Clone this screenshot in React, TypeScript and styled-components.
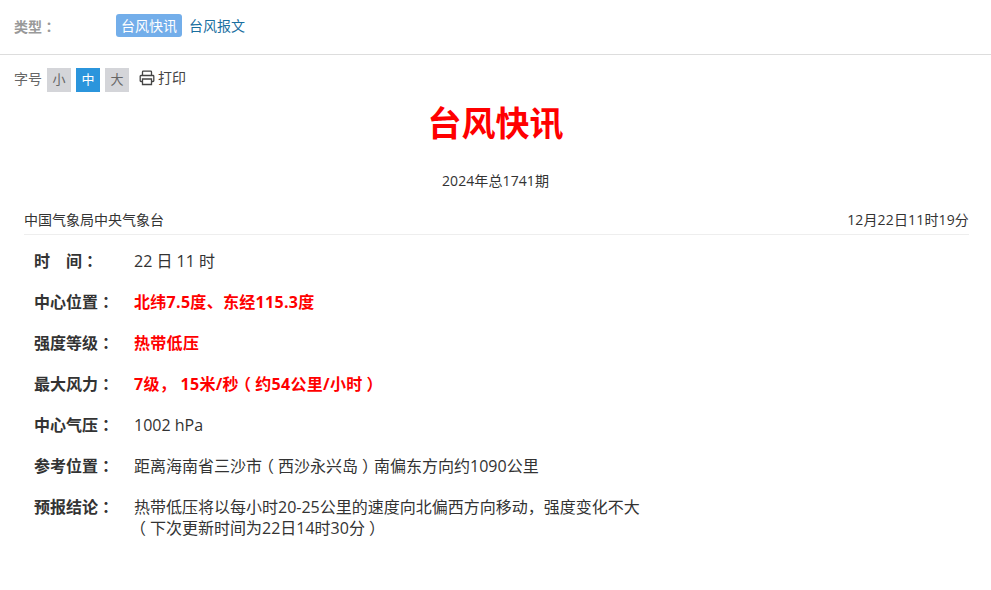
import { FC, Fragment } from 'react';
import styled, { createGlobalStyle } from 'styled-components';

const FONT = `'Open Sans', 'Noto Sans CJK SC', sans-serif`;

type Report = {
  label: string;
  lines: string[];
  alert?: boolean;
};

const reports: Report[] = [
  { label: '时\u3000间：', lines: [ '22 日 11 时' ] },
  { label: '中心位置：', lines: [ '北纬7.5度、东经115.3度' ], alert: true },
  { label: '强度等级：', lines: [ '热带低压' ], alert: true },
  { label: '最大风力：', lines: [ '7级， 15米/秒（约54公里/小时）' ], alert: true },
  { label: '中心气压：', lines: [ '1002 hPa' ] },
  { label: '参考位置：', lines: [ '距离海南省三沙市（西沙永兴岛）南偏东方向约1090公里' ] },
  {
    label: '预报结论：',
    lines: [ '热带低压将以每小时20-25公里的速度向北偏西方向移动，强度变化不大', '（下次更新时间为22日14时30分）' ],
  },
];

// the colon and brackets sit in the middle of their cell in the original
const withPunct = ( text: string ) => text.split( /([：（）])/ ).map( ( part, i ) => {
  if ( part === '：' ) return <Punct key={ i }>{ part }</Punct>;
  if ( part === '（' ) return <OpenBracket key={ i }>{ part }</OpenBracket>;
  if ( part === '）' ) return <CloseBracket key={ i }>{ part }</CloseBracket>;
  return <Fragment key={ i }>{ part }</Fragment>;
} );

const PrintIcon: FC = () => (
  <svg width="16" height="16" viewBox="0 0 16 16" fill="none" stroke="#444" strokeWidth="1.3">
    <path d="M3.5 5.5V2a.8.8 0 0 1 .8-.8h7.4a.8.8 0 0 1 .8.8v3.5" />
    <path d="M3.5 11.5H2a.8.8 0 0 1-.8-.8V6.3a.8.8 0 0 1 .8-.8h12a.8.8 0 0 1 .8.8v4.4a.8.8 0 0 1-.8.8h-1.5" />
    <path d="M3.5 9h9v5.500h-9z" />
  </svg>
);

export default function App() {
  return (
    <>
      <GlobalStyle />
      <TypeBar>
        <TypeLabel>类型<Punct>：</Punct></TypeLabel>
        <TypeTab $active>台风快讯</TypeTab>
        <TypeTab>台风报文</TypeTab>
      </TypeBar>
      <Tools>
        <ToolsLabel>字号</ToolsLabel>
        <SizeButton>小</SizeButton>
        <SizeButton $active>中</SizeButton>
        <SizeButton>大</SizeButton>
        <PrintButton>
          <PrintIcon />
          打印
        </PrintButton>
      </Tools>
      <Title>台风快讯</Title>
      <Issue>2024年总1741期</Issue>
      <Source>
        <span>中国气象局中央气象台</span>
        <Stamp>12月22日11时19分</Stamp>
      </Source>
      <ReportList>
        { reports.map( ( { label, lines, alert } ) => (
          <ReportRow key={ label }>
            <ReportLabel>{ withPunct( label ) }</ReportLabel>
            <ReportValue $alert={ alert }>
              { lines.map( ( line ) => <div key={ line }>{ withPunct( line ) }</div> ) }
            </ReportValue>
          </ReportRow>
        ) ) }
      </ReportList>
    </>
  );
}

const GlobalStyle = createGlobalStyle`
  body {
    margin: 0;
    background-color: #ffffff;
    font-family: ${ FONT };
    color: #333333;
  }
`;
const Punct = styled.span`
  font-family: 'Noto Sans CJK TC', sans-serif;
  line-height: 0;
`;
const OpenBracket = styled.span`
  margin: 0 4px 0 -4px;
`;
const CloseBracket = styled.span`
  margin: 0 -4px 0 4px;
`;
const TypeBar = styled.div`
  display: flex;
  align-items: center;
  height: 54px;
  padding-left: 14px;
  border-bottom: 1px solid #dddddd;
`;
const TypeLabel = styled.div`
  width: 102px;
  margin-top: -1px;
  font-size: 14px;
  font-weight: bold;
  line-height: 20px;
  color: #999999;
`;
const TypeTab = styled.div<{ $active?: boolean }>`
  height: 23px;
  margin-right: 2px;
  padding: 0 5px;
  margin-top: -3px;
  font-size: 14px;
  line-height: 23px;
  border-radius: 3px;
  color: ${ ( p ) => ( p.$active ? '#ffffff' : '#1a6f9f' ) };
  background-color: ${ ( p ) => ( p.$active ? '#73aeea' : 'transparent' ) };
`;
const Tools = styled.div`
  display: flex;
  align-items: center;
  height: 24px;
  margin-top: 13px;
  padding-left: 14px;
  font-size: 14px;
  line-height: 20px;
  color: #666666;
`;
const ToolsLabel = styled.span`
  width: 33px;
  margin-top: -2px;
`;
const SizeButton = styled.div<{ $active?: boolean }>`
  width: 24px;
  height: 24px;
  margin-right: 5px;
  font-size: 13px;
  line-height: 23px;
  text-align: center;
  color: ${ ( p ) => ( p.$active ? '#ffffff' : '#666666' ) };
  background-color: ${ ( p ) => ( p.$active ? '#2b95dc' : '#d4d5d9' ) };
`;
const PrintButton = styled.div`
  display: flex;
  align-items: center;
  gap: 3px;
  margin-left: 5px;
  margin-top: -4px;
  font-size: 14px;
  color: #444444;
`;
const Title = styled.h1`
  margin: 6px 0 0;
  height: 50px;
  font-size: 34px;
  font-weight: bold;
  line-height: 50px;
  text-align: center;
  color: #ff0000;
`;
const Issue = styled.div`
  margin-top: 23px;
  font-size: 14px;
  line-height: 20px;
  letter-spacing: 0.1px;
  text-align: center;
  color: #333333;
`;
const Source = styled.div`
  display: flex;
  justify-content: space-between;
  margin: 19px 22px 0 24px;
  padding-bottom: 4px;
  font-size: 14px;
  line-height: 20px;
  border-bottom: 1px solid #eeeeee;
`;
const Stamp = styled.span`
  letter-spacing: 0.15px;
`;
const ReportList = styled.div`
  display: flex;
  flex-direction: column;
  gap: 20px;
  margin-top: 16px;
  padding-left: 34px;
`;
const ReportRow = styled.div`
  display: flex;
  font-size: 16px;
  line-height: 21px;
`;
const ReportLabel = styled.div`
  width: 100px;
  font-weight: bold;
  color: #333333;
`;
const ReportValue = styled.div<{ $alert?: boolean }>`
  flex: 1;
  font-weight: ${ ( p ) => ( p.$alert ? 'bold' : 'normal' ) };
  letter-spacing: ${ ( p ) => ( p.$alert ? '0.3px' : '0' ) };
  color: ${ ( p ) => ( p.$alert ? '#ff0000' : '#333333' ) };
`;
